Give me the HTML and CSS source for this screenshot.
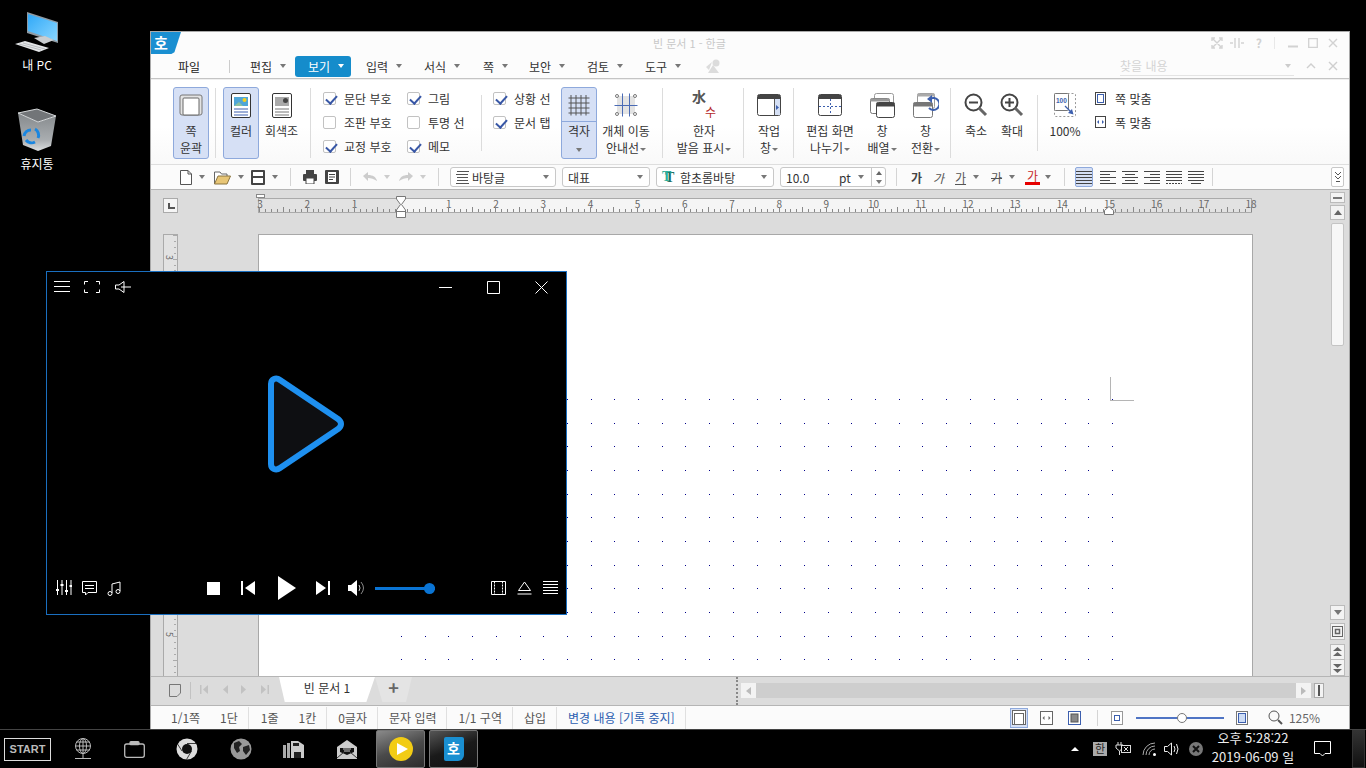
FILE: index.html
```html
<!DOCTYPE html>
<html lang="ko">
<head>
  <meta charset="UTF-8">
  <meta name="viewport" content="width=device-width, initial-scale=1.0">
  <title>빈 문서 1 - 한글</title>
  <link rel="stylesheet" href="styles.css">
</head>
<body>
  <div class="desktop">

    <!-- desktop icons -->
    <div class="desk-icon desk-pc">
      <svg width="44" height="44" viewBox="0 0 44 44">
        <defs>
          <linearGradient id="screen" x1="0" y1="0" x2="1" y2="1"><stop offset="0" stop-color="#2fa8f8"/><stop offset="1" stop-color="#8ad6ff"/></linearGradient>
        </defs>
        <path d="M12 1 43 11V32L12 22Z" fill="#8f9aa3"/>
        <path d="M13 3 42 12V30L13 20Z" fill="url(#screen)"/>
        <path d="M19 27 30 25 39 29 29 33Z" fill="#c9cdd0"/>
        <path d="M0 33 10 30 34 37 24 41Z" fill="#e4e6e8"/>
        <path d="M4 33 26 39M8 32 30 38" stroke="#9aa0a5" stroke-width=".6"/>
      </svg>
      <span>내 PC</span>
    </div>
    <div class="desk-icon desk-bin">
      <svg width="40" height="44" viewBox="0 0 40 44">
        <defs>
          <linearGradient id="bin" x1="0" y1="0" x2="0" y2="1"><stop offset="0" stop-color="#85898c"/><stop offset=".7" stop-color="#a9adb0"/><stop offset="1" stop-color="#dcdfe1"/></linearGradient>
        </defs>
        <path d="M0 5 5 37 20 43 33 38 38 8 20 14Z" fill="url(#bin)"/>
        <path d="M0 5 19 1 38 8 20 14Z" fill="#727578" stroke="#d6d9db"/>
        <g fill="none" stroke="#1a86e0" stroke-width="3">
          <path d="M6 28a7 7 0 0 1 7-6"/>
          <path d="M17 21a7 7 0 0 1 3 9"/>
          <path d="M17 34a7 7 0 0 1-9-2"/>
        </g>
      </svg>
      <span>휴지통</span>
    </div>

    <!-- hancom window -->
    <div class="hwp">
      <div class="hwp-title">
        <div class="hwp-logo">호</div>
        <div class="hwp-name">빈 문서 1 - 한글</div>
        <div class="win-btns">
          <svg width="12" height="12" viewBox="0 0 12 12" fill="none" stroke="#d2d2d2" stroke-width="1.4"><path d="M1 4V1H4M8 1H11V4M11 8V11H8M4 11H1V8M2 2 10 10M10 2 2 10"/></svg>
          <svg class="win-tight" width="14" height="10" viewBox="0 0 14 10" fill="none" stroke="#d2d2d2" stroke-width="1.4"><path d="M5 0V10M9 0V10M0 5H3M11 5H14"/></svg>
          <span class="help">?</span>
          <i class="win-sep"></i>
          <svg width="10" height="10" viewBox="0 0 10 10"><path d="M0 8.5H10" stroke="#d2d2d2" stroke-width="2"/></svg>
          <svg width="10" height="10" viewBox="0 0 10 10" fill="none" stroke="#d2d2d2" stroke-width="1.3"><path d="M.7.7H9.3V9.3H.7Z"/></svg>
          <svg width="10" height="10" viewBox="0 0 10 10" fill="none" stroke="#d2d2d2" stroke-width="1.4"><path d="M1 1 9 9M9 1 1 9"/></svg>
        </div>
      </div>

      <div class="hwp-menu">
        <div class="menu-file">파일</div>
        <i class="menu-sep"></i>
        <div class="menu-item">편집<i class="caret"></i></div>
        <div class="menu-item active">보기<i class="caret"></i></div>
        <div class="menu-item">입력<i class="caret"></i></div>
        <div class="menu-item">서식<i class="caret"></i></div>
        <div class="menu-item single">쪽<i class="caret"></i></div>
        <div class="menu-item">보안<i class="caret"></i></div>
        <div class="menu-item">검토<i class="caret"></i></div>
        <div class="menu-item">도구<i class="caret"></i></div>
        <svg class="menu-extra" width="15" height="14" viewBox="0 0 15 14" fill="#dcdcdc"><circle cx="10" cy="4" r="3.5"/><path d="M6 3 0 8 3 11ZM7 6 2 14H13Z"/></svg>
        <div class="menu-search">
          <div class="search-box">찾을 내용<i class="caret faint"></i></div>
          <svg width="10" height="6" viewBox="0 0 10 6" fill="none" stroke="#cfcfcf" stroke-width="1.4"><path d="M1 5 5 1 9 5"/></svg>
          <svg width="10" height="10" viewBox="0 0 10 10" fill="none" stroke="#cfcfcf" stroke-width="1.4"><path d="M1 1 9 9M9 1 1 9"/></svg>
        </div>
      </div>

      <div class="ribbon">
        <div class="tool on w36">
          <div class="tool-icon">
            <svg width="24" height="22" viewBox="0 0 24 22"><rect x="1" y="1" width="22" height="20" rx="2" fill="#e3e3e3" stroke="#777"/><rect x="4" y="4" width="16" height="17" rx="1" fill="#fff" stroke="#666"/></svg>
          </div>
          <div class="tool-label">쪽<br>윤곽</div>
        </div>
        <i class="rb-sep sep-a"></i>
        <div class="tool on w36">
          <div class="tool-icon">
            <svg width="20" height="25" viewBox="0 0 20 25"><rect x=".5" y=".5" width="19" height="24" rx="1.5" fill="#fff" stroke="#333"/><rect x="3" y="4" width="14" height="9" fill="#4fa6d8"/><circle cx="13.5" cy="7" r="2" fill="#f5d020"/><path d="M3 13 8 9 12 13Z" fill="#8cc0a0"/><path d="M3 16H17M3 19H17M3 22H17" stroke="#3c5fae"/></svg>
          </div>
          <div class="tool-label">컬러</div>
        </div>
        <div class="tool w37 ml4">
          <div class="tool-icon">
            <svg width="20" height="25" viewBox="0 0 20 25"><rect x=".5" y=".5" width="19" height="24" rx="1.5" fill="#fff" stroke="#333"/><rect x="3" y="4" width="14" height="9" fill="#aaa"/><circle cx="13.5" cy="7.5" r="2.5" fill="#444"/><path d="M3 16H17M3 19H17M3 22H17" stroke="#777"/></svg>
          </div>
          <div class="tool-label">회색조</div>
        </div>
        <i class="rb-sep sep-b"></i>
        <div class="check-col w84">
          <label class="chk"><i class="box yes"></i>문단 부호</label>
          <label class="chk"><i class="box"></i>조판 부호</label>
          <label class="chk"><i class="box yes"></i>교정 부호</label>
        </div>
        <div class="check-col w74">
          <label class="chk"><i class="box yes"></i>그림</label>
          <label class="chk"><i class="box"></i>투명 선</label>
          <label class="chk"><i class="box yes"></i>메모</label>
        </div>
        <i class="rb-sep short sep-c"></i>
        <div class="check-col w68">
          <label class="chk"><i class="box yes"></i>상황 선</label>
          <label class="chk"><i class="box yes"></i>문서 탭</label>
        </div>
        <div class="tool on w36 tool-split">
          <div class="tool-icon">
            <svg width="22" height="22" viewBox="0 0 22 22" fill="none" stroke="#555"><path d="M.5 4H21.5M.5 9H21.5M.5 14H21.5M.5 19H21.5M3 1V21.5M8 1V21.5M13 1V21.5M18 1V21.5"/></svg>
          </div>
          <div class="tool-label">격자<br><i class="caret"></i></div>
        </div>
        <div class="tool w52 ml3">
          <div class="tool-icon">
            <svg width="24" height="24" viewBox="0 0 24 24"><rect x="3" y="3" width="18" height="18" fill="#e3e3e3"/><path d="M8.5 .5V23.5M15.5 .5V23.5M.5 12.5H23.5" stroke="#4a6bb5"/><g fill="#fff" stroke="#777"><circle cx="3" cy="3" r="1.5"/><circle cx="21" cy="3" r="1.5"/><circle cx="3" cy="21" r="1.5"/><circle cx="21" cy="21" r="1.5"/></g></svg>
          </div>
          <div class="tool-label">개체 이동<br>안내선<i class="caret tiny"></i></div>
        </div>
        <i class="rb-sep sep-d"></i>
        <div class="tool w64">
          <div class="tool-icon">
            <div class="hanja"><span class="hanja-a">水</span><span class="hanja-b">수</span></div>
          </div>
          <div class="tool-label">한자<br>발음 표시<i class="caret tiny"></i></div>
        </div>
        <i class="rb-sep sep-e"></i>
        <div class="tool w38">
          <div class="tool-icon">
            <svg width="24" height="22" viewBox="0 0 24 22"><rect x=".5" y=".5" width="23" height="21" rx="2" fill="#fff" stroke="#444"/><rect x="1" y="1" width="22" height="4" fill="#444"/><rect x="17" y="5" width="6" height="16" fill="#d5e0f5"/><path d="M17.5 5V21" stroke="#555"/><path d="M19 11 22 13.5 19 16Z" fill="#3c5fae"/></svg>
          </div>
          <div class="tool-label">작업<br>창<i class="caret tiny"></i></div>
        </div>
        <i class="rb-sep sep-f"></i>
        <div class="tool w50">
          <div class="tool-icon">
            <svg width="24" height="22" viewBox="0 0 24 22"><rect x=".5" y=".5" width="23" height="21" rx="2" fill="#fff" stroke="#444"/><rect x="1" y="1" width="22" height="4" fill="#444"/><path d="M12.5 5V21M1 12.5H23" stroke="#3c5fae" stroke-dasharray="2 2"/></svg>
          </div>
          <div class="tool-label">편집 화면<br>나누기<i class="caret tiny"></i></div>
        </div>
        <div class="tool w34 ml10">
          <div class="tool-icon">
            <svg width="25" height="25" viewBox="0 0 25 25"><rect x="4.5" y=".5" width="19" height="15" rx="2" fill="#fff" stroke="#999"/><rect x=".5" y="5.5" width="19" height="15" rx="2" fill="#fff" stroke="#777"/><rect x=".5" y="5.5" width="19" height="3" fill="#999"/><rect x="6.5" y="9.5" width="18" height="15" rx="2" fill="#fff" stroke="#444"/><rect x="6.5" y="9.5" width="18" height="4" fill="#444"/></svg>
          </div>
          <div class="tool-label">창<br>배열<i class="caret tiny"></i></div>
        </div>
        <div class="tool w33 ml10">
          <div class="tool-icon">
            <svg width="26" height="25" viewBox="0 0 26 25"><rect x="4.5" y=".5" width="17" height="15" rx="2" fill="#fff" stroke="#999"/><rect x="4.5" y=".5" width="17" height="3" fill="#aaa"/><rect x=".5" y="9.5" width="19" height="15" rx="2" fill="#fff" stroke="#777"/><rect x=".5" y="9.5" width="19" height="4" fill="#777"/><path d="M17 6a6 6 0 1 1-1 9" fill="none" stroke="#3c5fae" stroke-width="2"/><path d="M19 2 14 6 19 10Z" fill="#3c5fae"/></svg>
          </div>
          <div class="tool-label">창<br>전환<i class="caret tiny"></i></div>
        </div>
        <i class="rb-sep sep-g"></i>
        <div class="tool w34">
          <div class="tool-icon">
            <svg width="24" height="24" viewBox="0 0 24 24" fill="none" stroke="#444"><circle cx="9.5" cy="9.5" r="8" stroke-width="2"/><path d="M5 9.5H14" stroke-width="2"/><path d="M15 15 22 22" stroke="#666" stroke-width="3"/></svg>
          </div>
          <div class="tool-label">축소</div>
        </div>
        <div class="tool w36 ml1">
          <div class="tool-icon">
            <svg width="24" height="24" viewBox="0 0 24 24" fill="none" stroke="#444"><circle cx="9.5" cy="9.5" r="8" stroke-width="2"/><path d="M5 9.5H14M9.5 5V14" stroke-width="2"/><path d="M15 15 22 22" stroke="#666" stroke-width="3"/></svg>
          </div>
          <div class="tool-label">확대</div>
        </div>
        <i class="rb-sep short sep-h"></i>
        <div class="tool w34">
          <div class="tool-icon">
            <svg width="22" height="24" viewBox="0 0 22 24"><rect x=".5" y=".5" width="21" height="23" rx="1" fill="none" stroke="#999" stroke-dasharray="2 2"/><rect x=".5" y=".5" width="14" height="17" rx="1" fill="#fff" stroke="#777"/><text x="2" y="10" class="mini-num">100</text><path d="M11 13 18 20" stroke="#3c5fae" stroke-width="1.2"/><path d="M19.5 21.5 14 20 18 16Z" fill="#3c5fae"/></svg>
          </div>
          <div class="tool-label">100%</div>
        </div>
        <div class="fit-col">
          <div class="chk fit">
            <svg width="11" height="13" viewBox="0 0 11 13"><rect x=".5" y=".5" width="10" height="12" fill="#fff" stroke="#444"/><rect x="2.5" y="2.5" width="6" height="8" fill="#fff" stroke="#3c5fae"/></svg>쪽 맞춤
          </div>
          <div class="chk fit">
            <svg width="11" height="12" viewBox="0 0 11 12"><rect x=".5" y=".5" width="10" height="11" fill="#fff" stroke="#444"/><path d="M4 4 2 6 4 8ZM7 4 9 6 7 8Z" fill="#3c5fae"/></svg>폭 맞춤
          </div>
        </div>
      </div>

      <div class="toolbar">
        <div class="tb w34">
          <svg width="12" height="15" viewBox="0 0 12 15"><path d="M.5.5H8L11.5 4V14.5H.5Z" fill="#fff" stroke="#555"/><path d="M8 .5V4H11.5" fill="none" stroke="#555"/></svg><i class="caret"></i>
        </div>
        <div class="tb w37">
          <svg width="17" height="15" viewBox="0 0 17 15"><path d="M.5 14V2H6L7.5 4H13V6" fill="#fff" stroke="#666"/><path d="M.5 14 4 6H16.5L13 14Z" fill="#e8c676" stroke="#8a7440"/></svg><i class="caret"></i>
        </div>
        <div class="tb w39">
          <svg width="14" height="15" viewBox="0 0 14 15"><rect width="14" height="15" rx="1" fill="#444"/><rect x="2" y="2" width="10" height="4" fill="#fff"/><rect x="2" y="8" width="10" height="5" fill="#fff"/></svg><i class="caret"></i>
        </div>
        <i class="tb-sep mr12"></i>
        <div class="tb w22">
          <svg width="14" height="14" viewBox="0 0 14 14" fill="#444"><rect x="3" y="0" width="8" height="4"/><rect x="0" y="4" width="14" height="7" rx="1"/><rect x="3" y="8" width="8" height="6" fill="#fff" stroke="#444"/></svg>
        </div>
        <div class="tb w25">
          <svg width="14" height="14" viewBox="0 0 14 14"><rect width="14" height="14" rx="1" fill="#444"/><rect x="3" y="2" width="8" height="10" fill="#fff"/><path d="M4 4.5H10M4 7H10M4 9.5H8" stroke="#444"/></svg>
        </div>
        <i class="tb-sep mr12"></i>
        <div class="tb w36">
          <svg width="14" height="10" viewBox="0 0 14 10" fill="#ccc"><path d="M0 4 5 0V3C10 3 13 5 14 9 11 7 8 6 5 6V9Z"/></svg><i class="caret faint"></i>
        </div>
        <div class="tb w39">
          <svg width="14" height="10" viewBox="0 0 14 10" fill="#ccc"><path d="M14 4 9 0V3C4 3 1 5 0 9 3 7 6 6 9 6V9Z"/></svg><i class="caret faint"></i>
        </div>
        <i class="tb-sep mr11"></i>
        <div class="combo w106">
          <svg width="13" height="13" viewBox="0 0 13 13" stroke="#555"><path d="M1 .5H13M0 3.5H12M1 6.5H12M1 9.5H12M0 12.5H13"/></svg>
          <span class="combo-text">바탕글</span><i class="caret"></i>
        </div>
        <div class="combo w88 ml6">
          <span class="combo-text">대표</span><i class="caret"></i>
        </div>
        <div class="combo w118 ml6">
          <span class="tt">T</span>
          <span class="combo-text">함초롬바탕</span><i class="caret"></i>
        </div>
        <div class="combo combo-size w106 ml6">
          <span class="combo-text">10.0</span><span class="unit">pt</span><i class="caret"></i>
          <div class="spin"><i class="caret up"></i><i class="caret"></i></div>
        </div>
        <i class="tb-sep ml10 mr14"></i>
        <div class="tb w22 gl"><b>가</b></div>
        <div class="tb w22 gl"><em>가</em></div>
        <div class="tb w36 gl"><u>가</u><i class="caret"></i></div>
        <div class="tb w36 gl"><s>가</s><i class="caret"></i></div>
        <div class="tb w37 gl"><span class="red-ga">가</span><i class="caret"></i></div>
        <i class="tb-sep mr10"></i>
        <div class="tb align on"><svg width="16" height="13" viewBox="0 0 16 13" stroke="#444"><path d="M0 .5H16M0 3.5H16M0 6.5H16M0 9.5H16M0 12.5H16"/></svg></div>
        <div class="tb align"><svg width="16" height="13" viewBox="0 0 16 13" stroke="#444"><path d="M0 .5H16M0 3.5H10M0 6.5H16M0 9.5H10M0 12.5H16"/></svg></div>
        <div class="tb align"><svg width="16" height="13" viewBox="0 0 16 13" stroke="#444"><path d="M0 .5H16M3 3.5H13M0 6.5H16M3 9.5H13M0 12.5H16"/></svg></div>
        <div class="tb align"><svg width="16" height="13" viewBox="0 0 16 13" stroke="#444"><path d="M0 .5H16M6 3.5H16M0 6.5H16M6 9.5H16M0 12.5H16"/></svg></div>
        <div class="tb align"><svg width="16" height="13" viewBox="0 0 16 13" stroke="#444"><path d="M0 .5H16M0 3.5H16M0 6.5H16M0 9.5H16"/><path d="M0 12.5H16" stroke-dasharray="2 1"/></svg></div>
        <div class="tb align"><svg width="16" height="13" viewBox="0 0 16 13" stroke="#444"><path d="M0 .5H16M0 3.5H16M0 6.5H16M0 9.5H16M3 12.5H13"/></svg></div>
        <i class="tb-sep ml5"></i>
        <div class="tb-end"><svg width="8" height="12" viewBox="0 0 8 12" fill="none" stroke="#555"><path d="M1 1 4 4 7 1M1 5 4 8 7 5"/><path d="M2 10.5H6"/></svg></div>
      </div>

      <div class="workspace">
        <div class="ws-left">
          <div class="corner-btn"><i></i></div>
          <div class="v-ruler">
            <svg class="v-ticks" width="13" height="441" viewBox="0 0 13 441" fill="none" stroke="#aaa" shape-rendering="crispEdges">
              <path d="M11 0V441" stroke-width="2" stroke-dasharray="1 4.9"/>
              <path d="M11 0V441" stroke-width="4" stroke-dasharray="1 22.6"/>
            </svg>
            <span class="v-num">3</span>
            <span class="v-num v-five">5</span>
          </div>
        </div>
        <div class="ws-main">
          <div class="h-ruler">
            <div class="h-nums">
              <span>3</span><span>2</span><span>1</span><span></span><span>1</span><span>2</span><span>3</span><span>4</span><span>5</span><span>6</span><span>7</span><span>8</span><span>9</span><span>10</span><span>11</span><span>12</span><span>13</span><span>14</span><span>15</span><span>16</span><span>17</span><span>18</span>
            </div>
            <svg class="h-ticks" width="994" height="15" viewBox="0 0 994 15" fill="none" stroke="#888" shape-rendering="crispEdges">
              <path d="M0 12H994" stroke-width="3" stroke-dasharray="1 4.9" stroke-dashoffset="-1.4"/>
              <path d="M0 11H994" stroke-width="5" stroke-dasharray="1 22.6" stroke-dashoffset="-1.4"/>
            </svg>
            <i class="mark mark-top"></i>
            <svg class="mark-left" width="10" height="22" viewBox="0 0 10 22" stroke="#777"><path d="M.5.5H9.5V3L5.5 8.5 9.5 14V21.5H.5V14L4.5 8.5 .5 3Z" fill="#fff"/><path d="M.5 15.5H9.5" fill="none"/></svg>
            <svg class="mark-right" width="10" height="9" viewBox="0 0 10 9" fill="#fff" stroke="#777"><path d="M5 .5 9.5 4.5V8.5H.5V4.5Z"/></svg>
          </div>
          <div class="page">
            <svg class="page-marks" width="993" height="442" viewBox="0 0 993 442" fill="none" shape-rendering="crispEdges">
              <path d="M851.5 142V166M851 165.5H875" stroke="#b5b5b5"/>
              <g stroke="#00008b" stroke-dasharray="1 22.7">
                <path d="M142 164.5H855"/><path d="M142 188.5H855"/><path d="M142 211.5H855"/><path d="M142 235.5H855"/>
                <path d="M142 259.5H855"/><path d="M142 282.5H855"/><path d="M142 306.5H855"/><path d="M142 330.5H855"/>
                <path d="M142 353.5H855"/><path d="M142 377.5H855"/><path d="M142 401.5H855"/><path d="M142 424.5H855"/>
              </g>
            </svg>
          </div>
        </div>
        <div class="ws-scroll">
          <div class="sc-btn sc-split"><i></i></div>
          <div class="sc-btn sc-arrow"><i class="caret up big"></i></div>
          <div class="sc-track"><div class="sc-thumb"></div></div>
          <div class="sc-btn sc-arrow"><i class="caret big"></i></div>
          <div class="sc-btn sc-target"><svg width="11" height="11" viewBox="0 0 11 11" fill="none" stroke="#666"><rect x=".5" y=".5" width="10" height="10"/><rect x="3.5" y="3.5" width="4" height="4" stroke-width="1.5"/></svg></div>
          <div class="sc-pair">
            <div class="sc-btn sc-arrow"><svg width="9" height="10" viewBox="0 0 9 10" fill="#666"><path d="M0 4 4.5 0 9 4ZM0 9 4.5 5 9 9Z"/></svg></div>
            <div class="sc-btn sc-arrow"><svg width="9" height="10" viewBox="0 0 9 10" fill="#666"><path d="M0 1 4.5 5 9 1ZM0 6 4.5 10 9 6Z"/></svg></div>
          </div>
        </div>
      </div>

      <div class="tabrow">
        <svg class="tab-note" width="12" height="13" viewBox="0 0 12 13" fill="none" stroke="#777"><path d="M.5.5H11.5V9L8 12.5H.5Z"/></svg>
        <i class="tab-sep"></i>
        <div class="tab-nav">
          <svg width="9" height="9" viewBox="0 0 9 9" fill="#c2c2c2"><rect width="1.5" height="9"/><path d="M8 0 3 4.5 8 9Z"/></svg>
          <svg width="6" height="9" viewBox="0 0 6 9" fill="#c2c2c2"><path d="M6 0 1 4.5 6 9Z"/></svg>
          <svg width="6" height="9" viewBox="0 0 6 9" fill="#c2c2c2"><path d="M0 0 5 4.5 0 9Z"/></svg>
          <svg width="9" height="9" viewBox="0 0 9 9" fill="#c2c2c2"><rect x="7.5" width="1.5" height="9"/><path d="M1 0 6 4.5 1 9Z"/></svg>
        </div>
        <div class="doc-tab">빈 문서 1</div>
        <div class="add-tab">+</div>
        <i class="tab-grip"></i>
        <div class="h-scroll">
          <div class="hs-btn"><i class="caret left"></i></div>
          <div class="hs-track"></div>
          <div class="hs-btn"><i class="caret right"></i></div>
          <div class="hs-end"><i></i></div>
        </div>
      </div>

      <div class="status">
        <div class="st-cell"><span>1/1쪽</span><span>1단</span></div>
        <div class="st-cell"><span>1줄</span><span>1칸</span></div>
        <div class="st-cell">0글자</div>
        <div class="st-cell">문자 입력</div>
        <div class="st-cell">1/1 구역</div>
        <div class="st-cell">삽입</div>
        <div class="st-cell st-blue">변경 내용 [기록 중지]</div>
        <div class="st-right">
          <div class="st-view on"><svg width="14" height="15" viewBox="0 0 14 15" fill="#fff" stroke="#666"><rect x=".5" y=".5" width="13" height="14"/><rect x="2.5" y="3.5" width="9" height="11"/></svg></div>
          <div class="st-view"><svg width="13" height="14" viewBox="0 0 13 14"><rect x=".5" y=".5" width="12" height="13" fill="#fff" stroke="#666"/><path d="M4.5 5 2.5 7 4.5 9ZM8.5 5 10.5 7 8.5 9Z" fill="#666"/></svg></div>
          <div class="st-view"><svg width="13" height="14" viewBox="0 0 13 14"><rect x=".5" y=".5" width="12" height="13" fill="#fff" stroke="#3c5fae"/><rect x="3" y="3" width="7" height="8" fill="#888" stroke="#555"/></svg></div>
          <i class="st-sep"></i>
          <svg class="zoom-small" width="12" height="14" viewBox="0 0 12 14"><rect x=".5" y=".5" width="11" height="13" fill="#fff" stroke="#999"/><rect x="3.5" y="4.5" width="5" height="5" fill="#fff" stroke="#3c5fae"/></svg>
          <div class="zoom-slider"><i></i></div>
          <svg width="12" height="14" viewBox="0 0 12 14"><rect x=".5" y=".5" width="11" height="13" fill="#fff" stroke="#777"/><rect x="2.5" y="2.5" width="7" height="9" fill="#cddcf5" stroke="#3c5fae"/></svg>
          <svg class="zoom-glass" width="15" height="15" viewBox="0 0 15 15" fill="none" stroke="#555"><circle cx="6" cy="6" r="5"/><path d="M10 10 14 14" stroke-width="2"/></svg>
          <span class="zoom-val">125%</span>
        </div>
      </div>
    </div>

    <!-- video player -->
    <div class="player">
      <div class="pl-top">
        <svg width="16" height="12" viewBox="0 0 16 12" stroke="#fff"><path d="M0 .5H16M0 5.5H16M0 10.5H16"/></svg>
        <svg class="ml14" width="16" height="12" viewBox="0 0 16 12" fill="none" stroke="#fff"><path d="M4 .5H.5V3.5M12 .5H15.5V3.5M.5 8.5V11.5H4M15.5 8.5V11.5H12"/></svg>
        <svg class="ml15" width="16" height="12" viewBox="0 0 16 12" fill="none" stroke="#fff"><path d="M.5 4H4L9 .5V11.5L4 8H.5ZM6 6H16"/></svg>
        <div class="pl-win">
          <svg width="13" height="13" viewBox="0 0 13 13" stroke="#fff"><path d="M0 6.5H13"/></svg>
          <svg width="13" height="13" viewBox="0 0 13 13" fill="none" stroke="#fff"><path d="M.5.5H12.5V12.5H.5Z"/></svg>
          <svg width="13" height="13" viewBox="0 0 13 13" stroke="#fff"><path d="M.5.5 12.5 12.5M12.5.5 .5 12.5"/></svg>
        </div>
      </div>
      <div class="pl-stage">
        <svg width="78" height="98" viewBox="0 0 78 98"><path d="M4 9C4 4 9 2 13 5L71 44C75 47 75 51 71 54L13 93C9 96 4 94 4 89Z" fill="#0e0f12" stroke="#1e90f0" stroke-width="6" stroke-linejoin="round"/></svg>
      </div>
      <div class="pl-bottom">
        <div class="pl-left">
          <svg width="16" height="16" viewBox="0 0 16 16" stroke="#fff"><path d="M1.5 0V15M6 0V15M10.5 0V15M15 0V15"/><path d="M0 10H3M4.500 5H7.500M9 11H12M13.500 6H16" stroke-width="2"/></svg>
          <svg width="15" height="15" viewBox="0 0 15 15" fill="none" stroke="#fff"><path d="M.5.5H14.5V11.5H6L3.5 14V11.5H.5Z"/><path d="M3 4.5H12M3 7.5H12"/></svg>
          <svg width="14" height="15" viewBox="0 0 14 15" fill="none" stroke="#fff"><circle cx="3" cy="12.5" r="2"/><circle cx="11" cy="10.5" r="2"/><path d="M5 12V3L13 1V10"/></svg>
        </div>
        <div class="pl-center">
          <i class="pl-stop"></i>
          <svg width="14" height="14" viewBox="0 0 14 14" fill="#fff"><rect width="2" height="14"/><path d="M14 0 4 7 14 14Z"/></svg>
          <svg width="18" height="24" viewBox="0 0 18 24" fill="#fff"><path d="M0 0 18 12 0 24Z"/></svg>
          <svg width="14" height="14" viewBox="0 0 14 14" fill="#fff"><rect x="12" width="2" height="14"/><path d="M0 0 10 7 0 14Z"/></svg>
          <svg width="18" height="16" viewBox="0 0 18 16"><path d="M0 5H3L9 0V16L3 11H0Z" fill="#fff"/><path d="M11 5Q13 8 11 11" fill="none" stroke="#ccc"/><path d="M13 2Q18 8 13 14" fill="none" stroke="#888"/></svg>
          <div class="pl-volume"><i></i></div>
        </div>
        <div class="pl-right">
          <svg width="15" height="14" viewBox="0 0 15 14" fill="none" stroke="#fff"><path d="M.5.5H14.5V13.5H.5Z"/><path d="M3.5.5V13.5M11.5.5V13.5" stroke-dasharray="2 1"/></svg>
          <svg width="15" height="14" viewBox="0 0 15 14" fill="none" stroke="#fff"><path d="M1.5 9.5 7.5 1 13.5 9.5ZM.5 13H14.5"/></svg>
          <svg width="15" height="14" viewBox="0 0 15 14" stroke="#fff"><path d="M0 .5H15M0 3.5H15M0 6.5H15M0 9.5H15M0 12.5H15"/></svg>
        </div>
      </div>
    </div>
  </div>

  <!-- taskbar -->
  <div class="taskbar">
    <div class="start">START</div>
    <div class="task-icons">
      <svg width="18" height="22" viewBox="0 0 18 22" fill="none" stroke="#bbb"><circle cx="9" cy="8" r="7.5"/><ellipse cx="9" cy="8" rx="3.5" ry="7.5"/><path d="M1.5 8H16.5M2.5 4H15.5M2.5 12H15.5M9 .5V20M1 20.5H17"/></svg>
      <svg width="21" height="17" viewBox="0 0 21 17" fill="none" stroke="#bbb" stroke-width="1.3"><rect x=".7" y="3" width="19.6" height="13.3" rx="2"/><rect x="6" y=".7" width="9" height="3" rx="1" fill="#bbb"/></svg>
      <svg width="22" height="22" viewBox="0 0 22 22"><circle cx="11" cy="11" r="10.5" fill="#ddd"/><circle cx="11" cy="11" r="5" fill="#111"/><path d="M11 5.5H21M6 13 1.5 6M15.5 13 10.5 21.5" stroke="#111" stroke-width=".8"/></svg>
      <svg width="22" height="22" viewBox="0 0 22 22"><circle cx="11" cy="11" r="10.5" fill="#999"/><path d="M4 5 9 3 12 6 9 9 10 13 7 15 4 10ZM13 9 19 7 20 12 16 17 13 13Z" fill="#222"/></svg>
      <svg width="21" height="19" viewBox="0 0 21 19"><path d="M0 5V18H3V5ZM4 3V18H7V3Z" fill="#aaa"/><path d="M8 1H15L21 5V18H8Z" fill="#ccc"/><rect x="11" y="12" width="7" height="6" fill="#222"/><rect x="10" y="3" width="6" height="3" fill="#222"/></svg>
      <svg width="22" height="19" viewBox="0 0 22 19"><path d="M1 7 11 0 21 7V19H1Z" fill="#ccc"/><path d="M4 8H18V12L11 15 4 12Z" fill="#111"/><path d="M7 9H15M8 11H14" stroke="#ccc"/><path d="M1 18 8 12M21 18 14 12" stroke="#333"/></svg>
    </div>
    <div class="task-btn task-player"><i class="yellow"><svg width="11" height="12" viewBox="0 0 11 12" fill="#fff"><path d="M0 0 11 6 0 12Z"/></svg></i></div>
    <div class="task-btn task-hwp"><span class="hwp-mini">호</span></div>
    <div class="tray">
      <i class="tray-up"></i>
      <span class="tray-han">한</span>
      <svg width="16" height="14" viewBox="0 0 16 14" fill="none" stroke="#ddd"><path d="M3 0V3M6 0V3M1 3H8V6L4.5 9 1 6ZM4.5 9V13"/><rect x="6.5" y="3.5" width="9" height="7" fill="#000"/><path d="M9 5 13 9M13 5 9 9"/></svg>
      <svg class="tray-wifi" width="16" height="14" viewBox="0 0 16 14" fill="none" stroke="#aaa"><path d="M1 13A12 12 0 0 1 13 1M4 13A9 9 0 0 1 13 4M7 13A6 6 0 0 1 13 7"/><circle cx="12.5" cy="12.5" r="1.5" fill="#fff" stroke="none"/></svg>
      <svg class="tray-sound" width="17" height="14" viewBox="0 0 17 14" fill="none" stroke="#eee"><path d="M.5 4.5H3.5L7.5 1V13L3.5 9.5H.5Z"/><path d="M10 4Q12 7 10 10M12.5 2Q15.5 7 12.5 12"/></svg>
      <svg width="14" height="14" viewBox="0 0 14 14"><circle cx="7" cy="7" r="7" fill="#777"/><path d="M4 4 10 10M10 4 4 10" stroke="#111" stroke-width="2"/></svg>
    </div>
    <div class="clock">오후 5:28:22<br>2019-06-09 일</div>
    <svg class="notify" width="17" height="16" viewBox="0 0 17 16" fill="none" stroke="#fff"><path d="M.5.5H16.5V12.5H11L8.5 15 6 12.5H.5Z"/></svg>
    <div class="show-desk"></div>
  </div>
</body>
</html>
```

FILE: styles.css
```css
* {
  box-sizing: border-box;
}

html, body {
  margin: 0;
  height: 100%;
}

body {
  width: 1366px;
  height: 768px;
  overflow: hidden;
  background: #000;
  font-family: "Noto Sans CJK KR", "Noto Sans", sans-serif;
  font-size: 12px;
  color: #333;
  display: flex;
  flex-direction: column;
}

i {
  display: block;
  font-style: normal;
}

svg {
  display: block;
  flex: none;
}

.desktop {
  position: relative;
  height: 729px;
}

/* common widths */
.w22 { width: 22px; }
.w25 { width: 25px; }
.w33 { width: 33px; }
.w34 { width: 34px; }
.w36 { width: 36px; }
.w37 { width: 37px; }
.w38 { width: 38px; }
.w39 { width: 39px; }
.w50 { width: 50px; }
.w52 { width: 52px; }
.w64 { width: 64px; }
.w68 { width: 68px; }
.w74 { width: 74px; }
.w84 { width: 84px; }
.w88 { width: 88px; }
.w106 { width: 106px; }
.w118 { width: 118px; }
.ml1 { margin-left: 1px; }
.ml3 { margin-left: 3px; }
.ml4 { margin-left: 4px; }
.ml5 { margin-left: 5px; }
.ml6 { margin-left: 6px; }
.ml10 { margin-left: 10px; }
.ml14 { margin-left: 14px; }
.ml15 { margin-left: 15px; }
.mr10 { margin-right: 10px; }
.mr11 { margin-right: 11px; }
.mr12 { margin-right: 12px; }
.mr14 { margin-right: 14px; }

.caret {
  display: inline-block;
  width: 0;
  height: 0;
  border-left: 3.5px solid transparent;
  border-right: 3.5px solid transparent;
  border-top: 4px solid #777;
  flex: none;
}

.caret.faint { border-top-color: #ccc; }
.caret.tiny { border-left-width: 3px; border-right-width: 3px; border-top-width: 3px; margin-left: 1px; vertical-align: middle; }
.caret.up { border-top: 0; border-bottom: 4px solid #666; }
.caret.big { border-left-width: 4.5px; border-right-width: 4.5px; border-top-width: 5px; }
.caret.up.big { border-bottom-width: 5px; border-top-width: 0; }
.caret.left { border: 0; border-top: 4.5px solid transparent; border-bottom: 4.5px solid transparent; border-right: 5px solid #bbb; }
.caret.right { border: 0; border-top: 4.5px solid transparent; border-bottom: 4.5px solid transparent; border-left: 5px solid #bbb; }

/* desktop icons */
.desk-icon {
  position: absolute;
  width: 74px;
  display: flex;
  flex-direction: column;
  align-items: center;
  color: #fff;
  line-height: 16px;
}

.desk-pc { left: 0; top: 11px; gap: 2px; }
.desk-bin { left: 0; top: 108px; gap: 4px; }
.desk-bin svg { margin-left: 2px; }

/* hancom window */
.hwp {
  position: absolute;
  left: 150px;
  top: 31px;
  width: 1200px;
  height: 698px;
  border: 1px solid #a9a9a9;
  border-bottom: 0;
  background: #fff;
  display: flex;
  flex-direction: column;
}

.hwp-title {
  height: 22px;
  flex: none;
  display: flex;
  align-items: center;
  background: #fcfcfc;
}

.hwp-logo {
  width: 30px;
  height: 22px;
  background: #1a8fd1;
  color: #fff;
  font-size: 15px;
  font-weight: 700;
  line-height: 21px;
  padding-left: 3px;
  clip-path: polygon(0 0, 100% 0, 78% 92%, 68% 100%, 0 100%);
}

.hwp-name {
  margin-left: 472px;
  font-size: 11px;
  color: #c8c8c8;
}

.win-btns {
  margin-left: auto;
  margin-right: 11px;
  display: flex;
  align-items: center;
  gap: 10px;
}

.win-tight {
  margin-left: -3px;
}

.help {
  color: #d2d2d2;
  font-weight: 700;
  font-size: 12px;
  line-height: 14px;
  margin-left: 2px;
}

.win-sep {
  width: 1px;
  height: 12px;
  background: #e8e8e8;
  margin-left: 2px;
  margin-right: 3px;
}

.hwp-menu {
  height: 25px;
  flex: none;
  display: flex;
  align-items: center;
  background: #fcfcfc;
  border-bottom: 1px solid #c4c4c4;
  color: #333;
}

.menu-file {
  width: 76px;
  text-align: center;
  color: #222;
}

.menu-sep {
  width: 1px;
  height: 13px;
  margin-left: 2px;
  background: #ccc;
  margin-right: 7px;
}

.menu-item {
  height: 21px;
  width: 56px;
  margin-right: 2px;
  padding-left: 13px;
  display: flex;
  align-items: center;
  gap: 8px;
  border-radius: 3px;
}

.menu-item.single {
  width: 45px;
  padding-left: 14px;
}

.menu-item.active {
  background: #158ccb;
  color: #fff;
}

.menu-item.active .caret {
  border-top-color: #fff;
}

.menu-extra {
  margin-left: 16px;
}

.menu-search {
  margin-left: auto;
  margin-right: 11px;
  display: flex;
  align-items: center;
  gap: 12px;
}

.search-box {
  width: 174px;
  height: 20px;
  border-bottom: 1px solid #e4e4e4;
  color: #d4d4d4;
  display: flex;
  align-items: center;
  justify-content: space-between;
  padding-right: 3px;
}

/* ribbon */
.ribbon {
  height: 86px;
  flex: none;
  padding: 7px 0 0 22px;
  display: flex;
  align-items: flex-start;
  border-top: 1px solid #efefef;
  border-bottom: 1px solid #dedede;
  background: linear-gradient(#fff 55%, #f9f9f9);
}

.tool {
  flex: none;
  height: 72px;
  display: flex;
  flex-direction: column;
  align-items: center;
  border: 1px solid transparent;
  border-radius: 3px;
}

.tool.on {
  background: #d6e0f5;
  border-color: #8ea9dc;
}

.tool-icon {
  height: 34px;
  flex: none;
  display: flex;
  align-items: center;
  justify-content: center;
}

.tool-label {
  line-height: 17px;
  text-align: center;
  white-space: nowrap;
  color: #333;
}

.tool-split .tool-icon {
  width: 100%;
  border-bottom: 1px solid #8ea9dc;
}

.tool-split .tool-label .caret {
  vertical-align: middle;
}

.rb-sep {
  flex: none;
  width: 1px;
  height: 70px;
  margin-top: 1px;
  background: #dcdcdc;
}

.rb-sep.short {
  height: 56px;
  margin-top: 8px;
}

.sep-a { margin-left: 6px; margin-right: 7px; }
.sep-b { margin-left: 10px; margin-right: 12px; }
.sep-c { margin-right: 11px; }
.sep-d { margin-left: 10px; margin-right: 9px; }
.sep-e { margin-left: 7px; margin-right: 6px; }
.sep-f { margin-left: 5px; margin-right: 11px; }
.sep-g { margin-left: 8px; margin-right: 8px; }
.sep-h { margin-left: 7px; margin-right: 10px; }

.check-col {
  flex: none;
  margin-top: -1px;
  display: flex;
  flex-direction: column;
}

.chk {
  height: 24px;
  display: flex;
  align-items: center;
  gap: 8px;
  white-space: nowrap;
}

.box {
  position: relative;
  width: 13px;
  height: 13px;
  flex: none;
  background: #fff;
  border: 1px solid #c2c2c2;
  border-radius: 2px;
}

.box.yes::after {
  content: "";
  position: absolute;
  left: 3.5px;
  top: 0;
  width: 5px;
  height: 9px;
  border: solid #3857a6;
  border-width: 0 2px 2px 0;
  transform: rotate(42deg);
}

.hanja {
  width: 24px;
  height: 30px;
  margin-top: -3px;
  display: flex;
  flex-direction: column;
  line-height: 15px;
}

.hanja-a {
  align-self: flex-start;
  font-size: 14px;
  font-weight: 700;
  color: #555;
}

.hanja-b {
  align-self: flex-end;
  font-size: 12px;
  color: #b52a2a;
}

.mini-num {
  font-family: "Liberation Sans", sans-serif;
  font-size: 6.5px;
  font-weight: 700;
  fill: #3c5fae;
}

.fit-col {
  margin-left: 13px;
  margin-top: -1px;
  display: flex;
  flex-direction: column;
}

.fit {
  gap: 9px;
}

/* toolbar */
.toolbar {
  height: 25px;
  flex: none;
  padding-left: 29px;
  display: flex;
  align-items: center;
  background: #fbfbfb;
  border-bottom: 1px solid #b5b5b5;
}

.tb {
  flex: none;
  height: 20px;
  display: flex;
  align-items: center;
  gap: 7px;
}

.gl {
  font-size: 12px;
  color: #444;
}

.gl em, .gl u, .gl s {
  color: #555;
}

.red-ga {
  margin-left: -2px;
  margin-right: -2px;
  padding: 0 2px;
  color: #c62828;
  line-height: 12px;
  border-bottom: 3px solid #e60000;
}

.tb-sep {
  flex: none;
  width: 1px;
  height: 18px;
  background: #d4d4d4;
}

.align {
  width: 22px;
  justify-content: center;
}

.align.on {
  width: 18px;
  height: 20px;
  margin-right: 4px;
  background: #d6e0f5;
  border: 1px solid #8ea9dc;
  border-radius: 2px;
}

.combo {
  flex: none;
  height: 20px;
  display: flex;
  align-items: center;
  gap: 3px;
  padding: 0 6px 0 5px;
  background: #fff;
  border: 1px solid #c8c8c8;
  border-radius: 3px;
}

.combo-text {
  flex: 1;
  color: #333;
  line-height: 17px;
}

.tt {
  width: 15px;
  font-family: "Liberation Serif", serif;
  font-size: 14px;
  line-height: 14px;
  color: #2bb09c;
  font-weight: 700;
  text-shadow: 3px 1px 0 #1d6f63;
}

.combo-size {
  padding-right: 0;
}

.combo-size .combo-text {
  flex: none;
  width: 50px;
}

.unit {
  width: 16px;
  color: #333;
}

.spin {
  margin-left: auto;
  width: 14px;
  height: 18px;
  display: flex;
  flex-direction: column;
  align-items: center;
  justify-content: space-around;
  border-left: 1px solid #c8c8c8;
}

.tb-end {
  margin-left: auto;
  margin-right: 5px;
  width: 13px;
  height: 20px;
  display: flex;
  align-items: center;
  justify-content: center;
  background: #fff;
  border: 1px solid #c8c8c8;
  border-radius: 2px;
}

/* workspace */
.workspace {
  flex: 1;
  min-height: 0;
  padding: 8px 4px 0 12px;
  display: flex;
  background: #dcdcdc;
}

.ws-left {
  width: 15px;
  flex: none;
  display: flex;
  flex-direction: column;
}

.corner-btn {
  height: 15px;
  padding: 4px 0 0 4px;
  border: 1px solid #aaa;
  background: #f5f5f5;
}

.corner-btn i {
  width: 7px;
  height: 6px;
  border-left: 2px solid #555;
  border-bottom: 2px solid #555;
}

.v-ruler {
  position: relative;
  margin-top: 21px;
  flex: 1;
  border: 1px solid #aaa;
  border-bottom: 0;
  background: #e2e2e2;
}

.v-ticks {
  position: absolute;
  left: 0;
  top: 0;
}

.v-num {
  position: absolute;
  left: 0;
  top: 16px;
  width: 10px;
  font-size: 9px;
  line-height: 13px;
  text-align: center;
  color: #666;
  transform: rotate(90deg);
}

.v-five {
  top: 393px;
}

.ws-main {
  width: 994px;
  flex: none;
  margin-left: 80px;
  display: flex;
  flex-direction: column;
}

.h-ruler {
  position: relative;
  height: 15px;
  flex: none;
  border: 1px solid #aaa;
  background: linear-gradient(90deg, #e2e2e2 143px, #f5f5f5 143px, #f5f5f5 851px, #e2e2e2 851px);
}

.h-nums {
  position: absolute;
  left: -22.5px;
  top: -1px;
  display: flex;
}

.h-nums span {
  flex: none;
  width: 47.2px;
  text-align: center;
  font-size: 10px;
  line-height: 12px;
  color: #666;
}

.h-ticks {
  position: absolute;
  left: -1px;
  top: -1px;
}

.mark {
  position: absolute;
  background: #fff;
  border: 1px solid #888;
}

.mark-top {
  left: -3px;
  top: -5px;
  width: 9px;
  height: 4px;
}

.mark-left {
  position: absolute;
  left: 137px;
  top: -3px;
}

.mark-right {
  position: absolute;
  left: 845px;
  top: 7px;
}

.page {
  position: relative;
  margin-top: 21px;
  margin-right: -1px;
  flex: 1;
  background: #fff;
  border: 1px solid #a8a8a8;
  border-bottom: 0;
}

.page-marks {
  position: absolute;
  left: 0;
  top: 0;
}

.ws-scroll {
  width: 15px;
  height: 484px;
  flex: none;
  margin-top: -6px;
  margin-left: auto;
  display: flex;
  flex-direction: column;
}

.sc-btn {
  flex: none;
  display: flex;
  align-items: center;
  justify-content: center;
  background: #f3f3f3;
  border: 1px solid #bbb;
}

.sc-split {
  height: 11px;
}

.sc-split i {
  width: 9px;
  height: 2px;
  background: #777;
}

.sc-arrow {
  height: 15px;
}

.sc-split + .sc-arrow {
  margin-top: 2px;
}

.sc-track {
  flex: 1;
  padding: 3px 1px;
  background: #dcdcdc;
}

.sc-thumb {
  height: 123px;
  background: #f7f7f7;
  border: 1px solid #c4c4c4;
  border-radius: 2px;
}

.sc-target {
  height: 17px;
  margin-top: 3px;
}

.sc-pair {
  margin-top: 4px;
}

.sc-pair .sc-arrow {
  height: 16px;
}

.sc-pair .sc-arrow + .sc-arrow {
  border-top: 0;
}

/* tab row */
.tabrow {
  height: 30px;
  flex: none;
  display: flex;
  align-items: flex-start;
  background: #dcdcdc;
  border-top: 1px solid #b5b5b5;
  border-bottom: 1px solid #b5b5b5;
}

.tab-note {
  margin: 7px 0 0 18px;
}

.tab-sep {
  width: 1px;
  height: 17px;
  margin: 5px 0 0 9px;
  background: #c2c2c2;
}

.tab-nav {
  width: 76px;
  flex: none;
  margin: 8px 0 0 9px;
  display: flex;
  align-items: center;
  gap: 12px;
}

.tab-nav svg + svg {
  margin-left: 1px;
}

.doc-tab {
  width: 96px;
  height: 25px;
  flex: none;
  margin-left: 3px;
  text-align: center;
  line-height: 22px;
  color: #333;
  background: #fff;
  clip-path: polygon(0 0, 100% 0, 91% 100%, 6% 100%);
}

.add-tab {
  width: 37px;
  height: 25px;
  flex: none;
  text-align: center;
  font-size: 18px;
  font-weight: 700;
  line-height: 21px;
  color: #666;
  background: #e4e4e4;
  clip-path: polygon(0 0, 100% 0, 84% 100%, 20% 100%);
}

.tab-grip {
  width: 3px;
  height: 28px;
  margin-left: 324px;
  border-left: 2px dotted #888;
}

.h-scroll {
  width: 583px;
  height: 15px;
  margin: 6px 0 0 2px;
  display: flex;
  background: #cecece;
}

.hs-btn {
  width: 15px;
  height: 15px;
  display: flex;
  align-items: center;
  justify-content: center;
  background: #f3f3f3;
}

.hs-track {
  flex: 1;
}

.hs-end {
  width: 10px;
  height: 15px;
  margin-left: 3px;
  display: flex;
  align-items: center;
  justify-content: center;
  background: #f3f3f3;
  border: 1px solid #aaa;
}

.hs-end i {
  width: 2px;
  height: 11px;
  background: #555;
}

/* status bar */
.status {
  height: 23px;
  flex: none;
  display: flex;
  align-items: center;
  background: #fbfbfb;
  color: #555;
  padding-left: 8px;
}

.st-cell {
  height: 22px;
  padding: 0 10px 0 12px;
  display: flex;
  align-items: center;
  gap: 20px;
  border-right: 1px solid #e0e0e0;
  white-space: nowrap;
}

.st-cell:nth-child(n+3) {
  padding-left: 11px;
}

.st-blue {
  color: #2a5db0;
}

.st-right {
  margin-left: auto;
  margin-right: 29px;
  display: flex;
  align-items: center;
}

.st-view {
  width: 18px;
  height: 20px;
  margin-right: 10px;
  display: flex;
  align-items: center;
  justify-content: center;
}

.st-view.on {
  background: #d6e0f5;
  border: 1px solid #8ea9dc;
}

.st-sep {
  width: 1px;
  height: 16px;
  margin: 0 13px 0 3px;
  background: #d4d4d4;
}

.zoom-slider {
  position: relative;
  width: 88px;
  height: 2px;
  margin: 0 12px 0 13px;
  background: #4f74c4;
}

.zoom-slider i {
  position: absolute;
  left: 41px;
  top: -4px;
  width: 10px;
  height: 10px;
  background: #fff;
  border: 1px solid #777;
  border-radius: 50%;
}

.zoom-glass {
  margin-left: 20px;
}

.zoom-val {
  margin-left: 6px;
  color: #666;
}

/* player */
.player {
  position: absolute;
  left: 46px;
  top: 271px;
  width: 521px;
  height: 344px;
  background: #000;
  border: 1px solid #1a6fc0;
  display: flex;
  flex-direction: column;
}

.pl-top {
  flex: none;
  height: 29px;
  padding: 1px 18px 0 7px;
  display: flex;
  align-items: center;
}

.pl-win {
  margin-left: auto;
  display: flex;
  gap: 35px;
}

.pl-stage {
  flex: 1;
  display: flex;
  align-items: center;
  padding-left: 220px;
  padding-bottom: 17px;
}

.pl-bottom {
  flex: none;
  height: 50px;
  padding: 0 8px 2px 9px;
  display: flex;
  align-items: center;
}

.pl-left {
  display: flex;
  align-items: center;
  gap: 10px;
  width: 151px;
}

.pl-center {
  display: flex;
  align-items: center;
}

.pl-stop {
  width: 13px;
  height: 13px;
  background: #fff;
}

.pl-center svg:nth-of-type(1) { margin-left: 21px; }
.pl-center svg:nth-of-type(2) { margin-left: 23px; }
.pl-center svg:nth-of-type(3) { margin-left: 20px; }
.pl-center svg:nth-of-type(4) { margin-left: 18px; }

.pl-volume {
  position: relative;
  width: 60px;
  height: 3px;
  margin-left: 9px;
  background: #0a74d4;
}

.pl-volume i {
  position: absolute;
  right: 0;
  top: -4px;
  width: 11px;
  height: 11px;
  border-radius: 50%;
  background: #0a74d4;
}

.pl-right {
  margin-left: auto;
  display: flex;
  align-items: center;
  gap: 11px;
}

/* taskbar */
.taskbar {
  position: relative;
  height: 39px;
  flex: none;
  display: flex;
  align-items: center;
  background: #000;
  border-top: 1px solid #444;
  color: #ddd;
}

.start {
  width: 47px;
  height: 23px;
  margin-left: 4px;
  border: 1px solid #ddd;
  text-align: center;
  font-family: "Liberation Sans", sans-serif;
  font-size: 11px;
  font-weight: 700;
  line-height: 21px;
  color: #bbb;
}

.task-icons {
  width: 325px;
  display: flex;
  align-items: center;
  justify-content: space-between;
  padding: 0 18px 0 23px;
}

.task-btn {
  width: 49px;
  height: 38px;
  flex: none;
  display: flex;
  align-items: center;
  justify-content: center;
  border: 1px solid #777;
  border-radius: 2px;
}

.task-player {
  background: linear-gradient(160deg, #8a8a8a, #4a4a4a 50%, #2c2c2c);
}

.task-hwp {
  margin-left: 4px;
  background: linear-gradient(160deg, #555, #1a1a1a 50%, #111);
}

.yellow {
  width: 24px;
  height: 24px;
  padding: 6px 0 0 8px;
  border-radius: 50%;
  background: #f2cc14;
}

.hwp-mini {
  width: 20px;
  height: 24px;
  background: #1a8fd1;
  color: #fff;
  font-size: 14px;
  font-weight: 700;
  line-height: 22px;
  text-align: center;
  border-radius: 2px 2px 6px 2px;
}

.tray {
  flex: none;
  margin-left: 593px;
  display: flex;
  align-items: center;
  gap: 8px;
}

.tray-up {
  width: 0;
  height: 0;
  margin-right: 6px;
  border-left: 4px solid transparent;
  border-right: 4px solid transparent;
  border-bottom: 4px solid #fff;
}

.tray-han {
  width: 14px;
  height: 14px;
  flex: none;
  background: #aaa;
  color: #222;
  font-size: 11px;
  line-height: 13px;
  text-align: center;
}

.tray-wifi {
  margin-left: 3px;
}

.tray-sound {
  margin-left: -2px;
}

.clock {
  width: 90px;
  flex: none;
  margin-left: 5px;
  padding-bottom: 4px;
  text-align: center;
  font-size: 13px;
  line-height: 19px;
  color: #eee;
  white-space: nowrap;
}

.notify {
  margin-left: 16px;
}

.show-desk {
  width: 13px;
  height: 38px;
  flex: none;
  margin-left: 21px;
  background: linear-gradient(#333, #111);
  border: 1px solid #333;
}
```
